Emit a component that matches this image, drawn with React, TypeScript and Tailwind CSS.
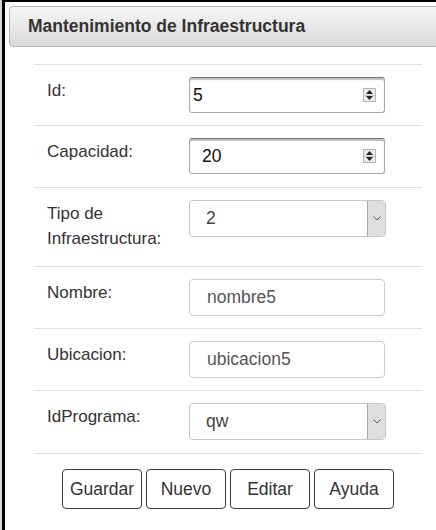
import React from "react";

const font = { fontFamily: '"Liberation Sans", Arial, Helvetica, sans-serif' };

function Spinner() {
  return (
    <div className="flex h-[14px] w-[13px] flex-col border border-[#b5b5b5] bg-[#ececec]">
      <div className="flex flex-1 items-center justify-center border-b border-[#c8c8c8]">
        <svg width="7" height="4" viewBox="0 0 7 4">
          <path d="M0 4 L3.5 0 L7 4 Z" fill="#222" />
        </svg>
      </div>
      <div className="flex flex-1 items-center justify-center">
        <svg width="7" height="4" viewBox="0 0 7 4">
          <path d="M0 0 L3.5 4 L7 0 Z" fill="#222" />
        </svg>
      </div>
    </div>
  );
}

function NumberBox({ value, pad }: { value: string; pad: string }) {
  return (
    <div
      className={`flex h-[36px] w-[196px] items-center justify-between rounded-[3px] border border-[#a9a9a9] border-t-[#767676] pr-[8px] shadow-[inset_0_2px_1px_rgba(0,0,0,0.25)] ${pad}`}
    >
      <span className="text-[17.5px] text-[#111]">{value}</span>
      <Spinner />
    </div>
  );
}

function SelectBox({ value }: { value: string }) {
  return (
    <div className="flex h-[37px] w-[197px] items-stretch overflow-hidden rounded-[4px] border border-[#c8c8c8]">
      <div className="flex flex-1 items-center pl-[16px] text-[17.5px] text-[#444]">{value}</div>
      <div className="flex w-[18px] items-center justify-center border-l border-[#a8a8a8] bg-[#dedede]">
        <svg width="8" height="5" viewBox="0 0 8 5">
          <path d="M0.5 0.5 L4 4 L7.5 0.5" fill="none" stroke="#555" strokeWidth="1" />
        </svg>
      </div>
    </div>
  );
}

function TextBox({ value }: { value: string }) {
  return (
    <div className="flex h-[37px] w-[196px] items-center rounded-[4px] border border-[#cccccc] pl-[17px] text-[17.5px] text-[#555]">
      {value}
    </div>
  );
}

function Row({ label, children, pb }: { label: React.ReactNode; children: React.ReactNode; pb: string }) {
  return (
    <div className={`flex border-t border-[#e0e0e0] pt-[12px] ${pb}`}>
      <div className="w-[155px] pl-[13px] pt-[1px] text-[17px] leading-[25px] text-[#333]">{label}</div>
      <div>{children}</div>
    </div>
  );
}

export default function App() {
  const buttons = ["Guardar", "Nuevo", "Editar", "Ayuda"];
  return (
    <div className="h-[530px] w-[436px] overflow-hidden bg-[#d6d6d6] pl-[2px]" style={font}>
      <div className="h-full border-l-[3px] border-t-[2px] border-black bg-white pt-[4px] pl-[4px]">
        <div className="-mr-[10px] flex h-[41px] items-center rounded-[4px] border border-[#b3b3b3] bg-gradient-to-b from-[#f6f6f6] to-[#dadada] pl-[18px]">
          <h1 className="text-[17.5px] font-bold text-[#333]">Mantenimiento de Infraestructura</h1>
        </div>
        <div className="ml-[25px] mt-[17px] w-[388px]">
          <Row label="Id:" pb="pb-[12px]">
            <NumberBox value="5" pad="pl-[3px]" />
          </Row>
          <Row label="Capacidad:" pb="pb-[13px]">
            <NumberBox value="20" pad="pl-[12px]" />
          </Row>
          <Row label={<>Tipo de<br />Infraestructura:</>} pb="pb-[15px]">
            <SelectBox value="2" />
          </Row>
          <Row label="Nombre:" pb="pb-[12px]">
            <TextBox value="nombre5" />
          </Row>
          <Row label="Ubicacion:" pb="pb-[12px]">
            <TextBox value="ubicacion5" />
          </Row>
          <Row label="IdPrograma:" pb="pb-[13px]">
            <SelectBox value="qw" />
          </Row>
          <div className="flex justify-center gap-[4px] border-t border-[#e0e0e0] pt-[15px]">
            {buttons.map((b) => (
              <button
                key={b}
                className="h-[40px] w-[80px] rounded-[4px] border border-[#3a3a3a] bg-white text-[17.5px] text-[#333]"
              >
                {b}
              </button>
            ))}
          </div>
        </div>
      </div>
    </div>
  );
}
